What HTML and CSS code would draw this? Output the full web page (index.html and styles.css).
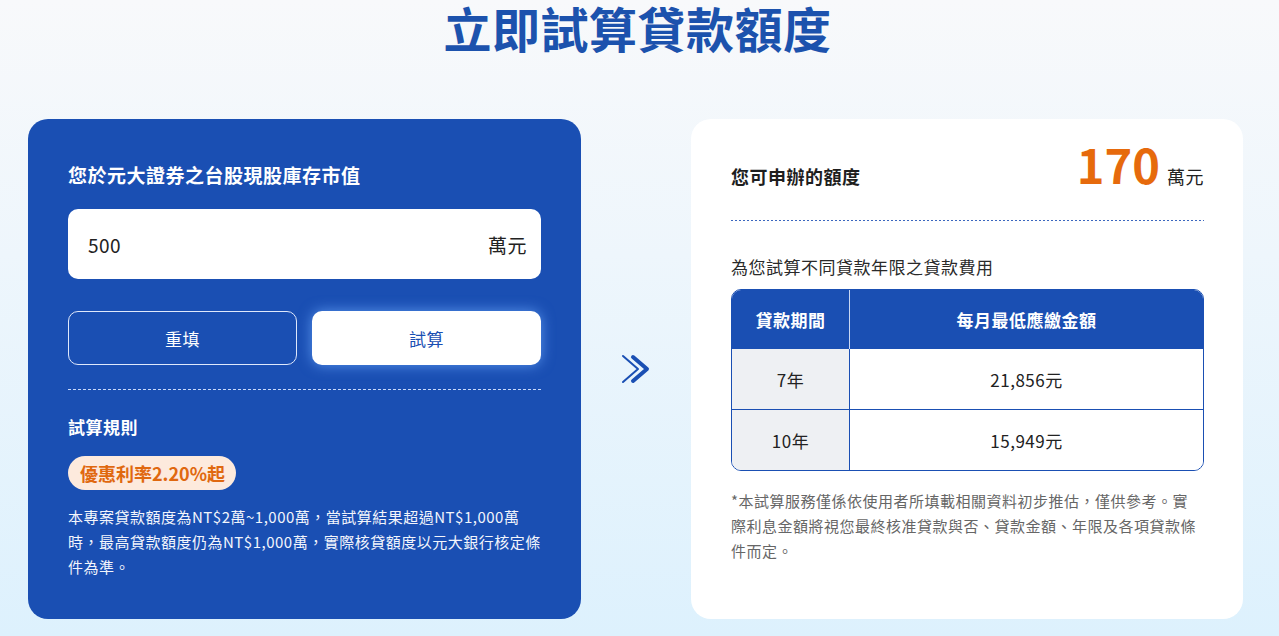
FILE: index.html
```html
<!DOCTYPE html>
<html lang="zh-Hant">
<head>
<meta charset="utf-8">
<title>立即試算貸款額度</title>
<link rel="stylesheet" href="styles.css">
</head>
<body>
<main class="page">
  <h1 class="title">立即試算貸款額度</h1>
  <div class="calc">
    <section class="card card-input">
      <div class="label">您於元大證券之台股現股庫存市值</div>
      <div class="field">
        <span class="field-value">500</span>
        <span class="field-unit">萬元</span>
      </div>
      <div class="buttons">
        <button class="btn btn-reset">重填</button>
        <button class="btn btn-calc">試算</button>
      </div>
      <div class="dots dots-light"></div>
      <div class="rules-title">試算規則</div>
      <div class="badge">優惠利率2.20%起</div>
      <p class="rules-text">本專案貸款額度為NT$2萬~1,000萬，當試算結果超過NT$1,000萬<br>時，最高貸款額度仍為NT$1,000萬，實際核貸額度以元大銀行核定條<br>件為準。</p>
    </section>
    <div class="arrow">
      <svg width="30" height="30" viewBox="0 0 30 30" aria-hidden="true">
        <path d="M3 2 L18 15 L3 28" fill="none" stroke="#1a4fb3" stroke-width="2" stroke-linecap="round" stroke-linejoin="round"/>
        <path d="M13 3 L27 15 L13 27" fill="none" stroke="#1a4fb3" stroke-width="4" stroke-linecap="round" stroke-linejoin="round"/>
      </svg>
    </div>
    <section class="card card-result">
      <div class="result-row">
        <div class="result-label">您可申辦的額度</div>
        <div class="result-amount"><span class="amount">170</span><span class="amount-unit">萬元</span></div>
      </div>
      <div class="dots dots-blue"></div>
      <div class="subtitle">為您試算不同貸款年限之貸款費用</div>
      <div class="table-wrap">
        <table class="fee-table">
          <thead>
            <tr><th class="col-term">貸款期間</th><th>每月最低應繳金額</th></tr>
          </thead>
          <tbody>
            <tr><td class="col-term">7年</td><td>21,856元</td></tr>
            <tr><td class="col-term">10年</td><td>15,949元</td></tr>
          </tbody>
        </table>
      </div>
      <p class="note">*本試算服務僅係依使用者所填載相關資料初步推估，僅供參考。實<br>際利息金額將視您最終核准貸款與否、貸款金額、年限及各項貸款條<br>件而定。</p>
    </section>
  </div>
</main>
</body>
</html>
```

FILE: styles.css
```css
* { box-sizing: border-box; }

html, body {
  margin: 0;
  height: 100%;
}

body {
  font-family: "Noto Sans CJK TC", "Noto Sans", sans-serif;
  background: linear-gradient(180deg, #f8f9fb 0%, #eef6fc 40%, #ddf1fd 100%);
  color: #222;
  overflow: hidden;
}

.page {
  padding: 3px 36px 0 28px;
}

.title {
  margin: 0;
  text-align: center;
  font-size: 48px;
  line-height: 48px;
  font-weight: 700;
  color: #1c52ad;
  letter-spacing: 0.5px;
  padding-left: 4px;
}

.calc {
  margin-top: 68px;
  display: grid;
  grid-template-columns: 553px 110px 552px;
  align-items: stretch;
}

.card {
  border-radius: 20px;
}

.card-input {
  background: #1a4fb3;
  color: #fff;
  padding: 43px 40px 40px 40px;
  letter-spacing: 0.5px;
}

.label {
  font-size: 19px;
  line-height: 26px;
  font-weight: 700;
}

.field {
  margin-top: 21px;
  height: 70px;
  background: #fff;
  border-radius: 10px;
  display: flex;
  align-items: center;
  justify-content: space-between;
  padding: 0 14px 0 20px;
  color: #222;
  font-size: 19px;
}

.buttons {
  margin-top: 32px;
  display: grid;
  grid-template-columns: 1fr 1fr;
  gap: 15px;
}

.btn {
  height: 54px;
  border-radius: 10px;
  font-family: inherit;
  font-size: 17px;
  letter-spacing: 0.5px;
  cursor: pointer;
}

.btn-reset {
  background: transparent;
  border: 1px solid #dfe8fb;
  color: #fff;
}

.btn-calc {
  background: #fff;
  border: none;
  color: #1a4fb3;
  box-shadow: 0 0 14px rgba(110, 170, 255, 0.75);
}

.dots {
  height: 1px;
}

.dots-light {
  margin-top: 24px;
  background: repeating-linear-gradient(90deg, #c9dafb 0 3px, transparent 3px 5px);
}

.rules-title {
  margin-top: 25px;
  font-size: 17px;
  line-height: 24px;
  font-weight: 700;
}

.badge {
  display: inline-block;
  margin-top: 17px;
  height: 34px;
  line-height: 34px;
  padding: 0 11px 0 12px;
  border-radius: 17px;
  background: #fdeadd;
  color: #e0680f;
  font-size: 18px;
  font-weight: 700;
  letter-spacing: 0;
}

.rules-text {
  margin: 14px 0 0;
  font-size: 15px;
  line-height: 25px;
  color: #f2f5fc;
  white-space: nowrap;
}

.arrow {
  display: flex;
  align-items: center;
  justify-content: center;
  padding-right: 2px;
}

.card-result {
  background: #fff;
  padding: 19px 39px 30px 40px;
  letter-spacing: 0.5px;
}

.result-row {
  display: flex;
  justify-content: space-between;
  align-items: baseline;
}

.result-label {
  font-size: 18px;
  font-weight: 700;
  color: #1e1e1e;
}

.amount {
  font-size: 47px;
  line-height: 52px;
  font-weight: 700;
  color: #e66a0c;
  letter-spacing: 0;
  margin-right: 7px;
}

.amount-unit {
  font-size: 18px;
  color: #222;
}

.dots-blue {
  margin-top: 30px;
  background: repeating-linear-gradient(90deg, #3c67bf 0 2px, transparent 2px 4px);
}

.subtitle {
  margin-top: 34px;
  font-size: 17px;
  line-height: 24px;
  color: #2a2a2a;
}

.table-wrap {
  margin-top: 10px;
  border: 1px solid #1a4fb3;
  border-radius: 10px;
  overflow: hidden;
}

.fee-table {
  width: 100%;
  border-collapse: separate;
  border-spacing: 0;
  font-size: 17px;
  text-align: center;
}

.fee-table th {
  height: 59px;
  background: #1a4fb3;
  color: #fff;
  font-weight: 700;
  padding: 0;
}

.fee-table th.col-term {
  border-right: 1px solid #c9d7f3;
}

.fee-table td {
  height: 61px;
  border-top: 1px solid #1a4fb3;
  color: #222;
  padding: 0;
  background: #fff;
}

.fee-table tbody tr:first-child td {
  border-top: none;
  height: 60px;
}

.fee-table .col-term {
  width: 118px;
}

.fee-table td.col-term {
  background: #eef0f3;
  border-right: 1px solid #1a4fb3;
}

.note {
  margin: 17px 0 0;
  font-size: 15px;
  line-height: 25px;
  color: #666;
  white-space: nowrap;
}
```
